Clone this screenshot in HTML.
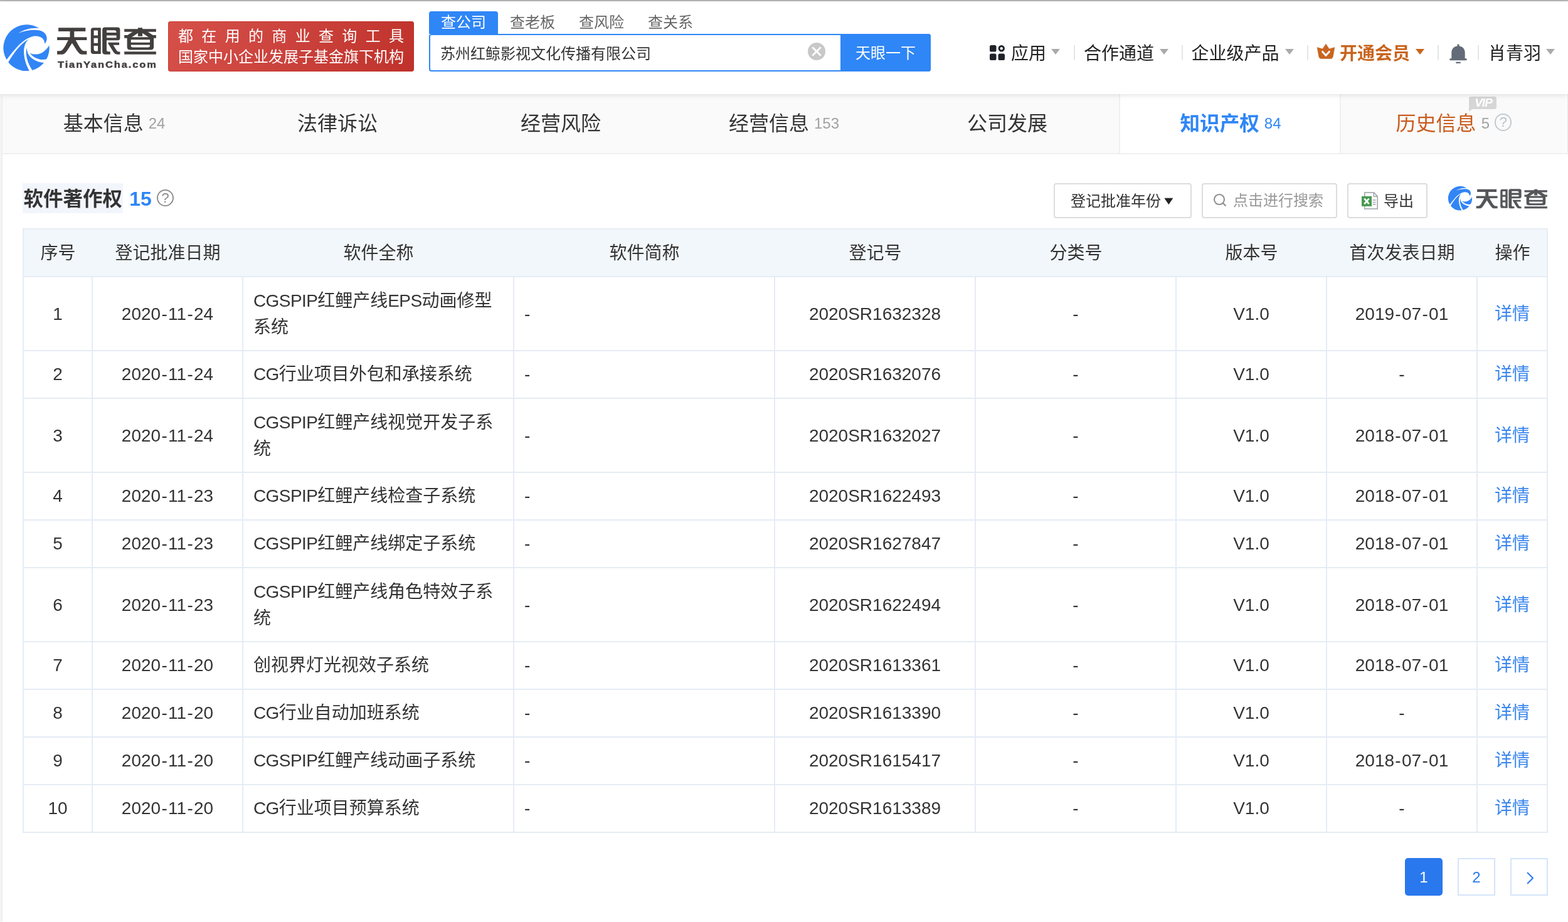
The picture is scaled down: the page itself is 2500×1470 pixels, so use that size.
<!DOCTYPE html>
<html lang="zh-CN">
<head>
<meta charset="utf-8">
<title>天眼查 - 软件著作权</title>
<style>
*{box-sizing:border-box;margin:0;padding:0}
html,body{width:2500px;height:1470px;background:#f4f4f4}
#page{position:absolute;left:0;top:0;width:2500px;height:1470px;overflow:hidden;will-change:transform}
body{font-family:"Liberation Sans","Noto Sans CJK SC",sans-serif;color:#333;position:relative;-webkit-font-smoothing:antialiased}
.abs{position:absolute}
/* ---------- top chrome line ---------- */
#topline1{left:0;top:0;width:2500px;height:1px;background:#c6c6c6}
#topline2{left:0;top:1px;width:2500px;height:1px;background:#a9a9a9}
/* ---------- header ---------- */
#header{left:0;top:2px;width:2500px;height:148px;background:#fff;box-shadow:0 1px 9px rgba(0,0,0,.13);z-index:5}
#banner{left:268px;top:32px;width:392px;height:80px;border-radius:4px;background:linear-gradient(115deg,#d6504a 0%,#cb423c 50%,#bf322b 100%);box-shadow:inset 0 0 0 1px rgba(190,30,22,.45);color:#fff;font-size:24px;white-space:nowrap}
#banner .l1{position:absolute;left:16px;top:8.3px;height:32px;line-height:32px;letter-spacing:13.33px}
#banner .l2{position:absolute;left:16px;top:41px;height:32px;line-height:32px}
#tyc{left:92px;top:91.5px;font-size:15px;line-height:18px;font-weight:bold;color:#433f3f;letter-spacing:1.7px;transform:scaleX(1.1);transform-origin:0 0;-webkit-text-stroke:0.45px #433f3f;white-space:nowrap}
/* search */
.stab{top:16px;width:110px;height:36px;line-height:36px;text-align:center;font-size:24px;color:#666;white-space:nowrap}
.stab.on{background:#2f86f6;color:#fff;border-radius:4px 4px 0 0}
#sbox{left:684px;top:52px;width:800px;height:60px;border:2px solid #2f86f6;border-radius:4px;background:#fff}
#sbox .q{position:absolute;left:16px;top:1px;height:56px;line-height:58px;font-size:24px;color:#333;white-space:nowrap}
#sbtn{left:1340px;top:52px;width:144px;height:60px;background:#2f86f6;border-radius:0 4px 4px 0;color:#fff;font-size:24px;text-align:center;line-height:62px;white-space:nowrap}
/* nav */
.nav{top:64px;height:40px;line-height:40px;font-size:28px;color:#222;white-space:nowrap}
.nav.vip{color:#c8641e;font-weight:bold}
.caret{width:0;height:0;border-left:7.5px solid transparent;border-right:7.5px solid transparent;border-top:9px solid #aaa}
.vdiv{top:70px;width:2px;height:24px;background:#e3e6ea}
/* ---------- main ---------- */
#main{left:4px;top:150px;width:2496px;height:1320px;background:#fff}
#edgeL{left:3px;top:150px;width:1px;height:1320px;background:#ebebeb}
#edgeR{left:2498px;top:150px;width:2px;height:94px;background:#f0f0f0;z-index:2}
#tabs{left:0;top:0;width:2496px;height:96px;background:linear-gradient(90deg,#fafafa 0,#fafafa 2492px,#fff 2492px);border-bottom:2px solid #f0f0f0}
.tab{top:0;width:356px;height:94px;line-height:94px;text-align:center;font-size:32px;color:#333;white-space:nowrap}
.tab i{font-style:normal;font-size:24px;color:#a2a2a2;margin-left:8px;position:relative;top:-3px}
.tab.on{background:#fff;border-left:2px solid #f0f0f0;border-right:2px solid #f0f0f0;color:#2f86f6;font-weight:bold;height:94px;width:354px;padding-left:2px;font-size:31.6px}
.tab.on i{color:#2f86f6;font-weight:normal}
.tab.his{color:#ca5b1e}
.qm.q2{display:inline-block;vertical-align:top;margin:31.3px 0 0 8px;border-color:#c3cad1;color:#b9c1c9;font-weight:normal;font-size:22.5px;line-height:24.6px;width:27.4px;height:27.4px;border-width:2px}

/* ---------- section head ---------- */
#ttl{left:32px;top:142px;width:160px;height:48px;background:#f2f6fc;font-size:31.5px;font-weight:bold;line-height:51.5px;color:#333;white-space:nowrap;padding-left:1.5px}
#cnt{left:202.3px;top:142px;height:48px;line-height:50px;font-size:32px;font-weight:bold;color:#2f86f6}
.qm{border:2.2px solid #909090;border-radius:50%;color:#8c8c8c;text-align:center;font-size:22.5px;width:27.8px;height:27.8px;line-height:24.6px}
.btn{top:142px;height:56px;border:2px solid #ddd;border-radius:4px;background:#fff;font-size:24px;line-height:54px;color:#333;white-space:nowrap}
/* ---------- table ---------- */
#tbl{left:32px;top:214px;border-collapse:separate;border-spacing:0;table-layout:fixed;width:2432px;border-right:2px solid #e5ecf5;border-bottom:2px solid #e5ecf5;font-size:28px;line-height:42px;color:#333}
#tbl th,#tbl td{border-left:2px solid #e5ecf5;border-top:2px solid #e5ecf5;padding:16px 16px 16px;text-align:center;vertical-align:middle;font-weight:normal;overflow:hidden}
#tbl th{background:#f2f7fb;border-left-width:0;padding:17px 0 15px 3px;white-space:nowrap}
#tbl th:first-child{border-left-width:2px;padding-left:1px}
#tbl b{font-weight:normal;margin:0 1.3px}
#tbl em{font-style:normal;letter-spacing:-0.6px}
#tbl td.l{text-align:left;white-space:nowrap}
#tbl tr.d td{padding-top:17px;padding-bottom:15px}
#tbl td a{color:#3a86ee;text-decoration:none}
/* ---------- pager ---------- */
.pg{top:1218px;width:60px;height:60px;border:2px solid #d5e4fb;border-radius:0;color:#2d7bf0;font-size:24px;line-height:58.5px;text-align:center;background:#fff}
.pg.on{background:#2a78ee;border-color:#2a78ee;color:#fff;border-radius:5px}
</style>
</head>
<body>
<div id="page">
<div id="topline1" class="abs"></div><div id="topline2" class="abs"></div>

<div id="header" class="abs">

  <svg width="0" height="0" style="position:absolute">
    <defs>
      <symbol id="mark" viewBox="0 0 1470 1470">
        <path d="M175,1055 A620,620 0 0 1 1045,220 C850,190 650,250 490,345 C700,270 900,245 1050,275 C1200,305 1260,420 1245,520 Q1235,580 1190,630 C1185,500 1100,430 950,425 C800,420 600,560 480,690 C380,800 280,920 175,1055 Z"/>
        <path d="M765,505 C600,600 420,780 220,1125 A620,620 0 0 0 780,1350 C680,1180 620,950 640,760 C655,650 700,570 765,505 Z"/>
        <path d="M710,740 C670,900 720,1130 860,1335 A620,620 0 0 0 1170,1135 C1000,1130 800,1020 740,880 Q715,810 710,740 Z"/>
        <path d="M795,880 C900,930 1050,920 1150,850 C1230,790 1290,720 1310,670 A620,620 0 0 1 1240,1040 C1100,1080 900,1020 795,880 Z"/>
      </symbol>
      <symbol id="word" viewBox="0 0 2500 1176">
        <g fill-rule="evenodd">
        <path d="M105,120 H740 V205 H475 V340 H770 V410 H510 C560,500 640,665 700,665 H770 V745 H660 C590,745 560,690 425,480 C290,690 260,745 190,745 H75 V665 H150 C210,665 290,500 335,410 H75 V340 H375 V205 H105 Z"/>
        <path d="M925,120 H1100 V735 H925 Q865,735 865,675 V180 Q865,120 925,120 Z M935,185 V300 H1030 V185 Z M935,365 V480 H1030 V365 Z M935,545 V620 Q935,670 985,670 H1030 V545 Z"/>
        <path d="M1195,110 H1490 Q1550,110 1550,170 V365 Q1550,415 1500,415 H1235 V640 Q1235,680 1275,680 H1320 V745 H1200 Q1135,745 1135,680 V170 Q1135,110 1195,110 Z M1235,180 V235 H1465 Q1465,180 1420,180 Z M1235,300 V355 H1465 V300 Z"/>
        <path d="M1275,465 H1530 V525 H1390 L1470,655 Q1490,685 1520,685 H1550 V745 H1480 Q1430,745 1400,700 L1270,490 Z"/>
        <path d="M1650,150 H1970 V120 H2075 V150 H2395 V215 H2200 L2320,295 H2395 V365 H2340 V570 Q2340,640 2270,640 H1785 Q1715,640 1715,570 V365 H1650 V295 H1725 L1845,215 H1650 Z M1970,245 L1825,340 H1970 Z M2075,245 V320 H1970 V340 H2220 Z M1805,400 V465 H2250 V400 Z M1805,520 V540 Q1805,580 1845,580 H2210 Q2250,580 2250,540 V520 Z"/>
        <rect x="1650" y="680" width="745" height="65"/>
        </g>
      </symbol>
    </defs>
  </svg>
  <svg class="abs" style="left:0;top:30px" width="88" height="88" fill="#3285f5"><use href="#mark"/></svg>
  <svg class="abs" style="left:86px;top:34px" width="170" height="80" fill="#433f3f"><use href="#word"/></svg>
  <div id="tyc" class="abs">TianYanCha.com</div>
  <div id="banner" class="abs"><div class="l1">都在用的商业查询工具</div><div class="l2">国家中小企业发展子基金旗下机构</div></div>

  <div class="abs stab on" style="left:684px">查公司</div>
  <div class="abs stab" style="left:794px">查老板</div>
  <div class="abs stab" style="left:904px">查风险</div>
  <div class="abs stab" style="left:1014px">查关系</div>
  <div id="sbox" class="abs"><div class="q">苏州红鲸影视文化传播有限公司</div></div>
  <div id="sbtn" class="abs">天眼一下</div>

  <!-- right nav (page y = header y + 2) -->
  <svg class="abs" style="left:1578px;top:70px" width="24" height="24" viewBox="0 0 24 24">
    <rect x="0" y="0" width="10.5" height="10.5" rx="2.6" fill="#1f2329"/>
    <rect x="0" y="13.5" width="10.5" height="10.5" rx="2.6" fill="#1f2329"/>
    <rect x="13.5" y="13.5" width="10.5" height="10.5" rx="2.6" fill="#1f2329"/>
    <circle cx="18.75" cy="5.25" r="3.7" fill="none" stroke="#1f2329" stroke-width="3"/>
  </svg>
  <div class="abs nav" style="left:1612px">应用</div>
  <div class="abs caret" style="left:1676px;top:76px"></div>
  <div class="abs vdiv" style="left:1712px"></div>
  <div class="abs nav" style="left:1728px">合作通道</div>
  <div class="abs caret" style="left:1849px;top:76px"></div>
  <div class="abs vdiv" style="left:1884px"></div>
  <div class="abs nav" style="left:1899.6px">企业级产品</div>
  <div class="abs caret" style="left:2049px;top:76px"></div>
  <div class="abs vdiv" style="left:2084px"></div>
  <svg class="abs" style="left:2100px;top:68.2px" width="28" height="24" viewBox="0 0 28 24">
    <path d="M0.1,5.6 L8.7,8 L14,0.2 L19.3,8 L27.9,5.6 L25.3,20 Q24.7,23.5 21.4,23.5 H6.6 Q3.3,23.5 2.7,20 Z" fill="#c8661f" stroke="#c8661f" stroke-width="0.6" stroke-linejoin="round"/>
    <path d="M8.6,12.4 L13.95,18.2 L19.3,12.4" fill="none" stroke="#fff" stroke-width="3" stroke-linejoin="miter" stroke-linecap="round"/>
  </svg>
  <div class="abs nav vip" style="left:2136px">开通会员</div>
  <div class="abs caret" style="left:2257px;top:76px;border-top-color:#c8641e"></div>
  <div class="abs vdiv" style="left:2292px"></div>
  <svg class="abs" style="left:2309.5px;top:66px" width="30" height="36" viewBox="0 0 30 36">
    <path d="M13.4,3.6 Q13.4,2.4 15,2.4 Q16.6,2.4 16.6,3.6 V5.6 C22,6.2 25.7,10.4 25.7,16 V25.3 H28.5 V28.2 H1.5 V25.3 H4.3 V16 C4.3,10.4 8,6.2 13.4,5.6 Z" fill="#626b77"/>
    <rect x="11.1" y="30.7" width="7.8" height="2.4" rx="1.1" fill="#626b77"/>
  </svg>
  <div class="abs vdiv" style="left:2356px"></div>
  <div class="abs nav" style="left:2373px">肖青羽</div>
  <div class="abs caret" style="left:2465px;top:76px"></div>
  <!-- clear icon -->
  <svg class="abs" style="left:1288px;top:66px" width="28" height="28" viewBox="0 0 28 28">
    <circle cx="14" cy="14" r="14" fill="#c8c8c8"/>
    <path d="M8.2,8.2 L19.8,19.8 M19.8,8.2 L8.2,19.8" stroke="#fff" stroke-width="3" stroke-linecap="round"/>
  </svg>
</div>

<div id="edgeL" class="abs"></div><div id="edgeR" class="abs"></div>
<div id="main" class="abs">
  <div id="tabs" class="abs">
    <div class="abs tab" style="left:0">基本信息<i>24</i></div>
    <div class="abs tab" style="left:356px">法律诉讼</div>
    <div class="abs tab" style="left:712px">经营风险</div>
    <div class="abs tab" style="left:1068px">经营信息<i>153</i></div>
    <div class="abs tab" style="left:1424px">公司发展</div>
    <div class="abs tab on" style="left:1780px">知识产权<i>84</i></div>
    <div class="abs tab his" style="left:2136px">历史信息<i>5</i><span class="qm q2">?</span></div>
    <svg class="abs" style="left:2338px;top:4px" width="46" height="26" viewBox="0 0 46 26"><path d="M3.1,0 H40.9 Q44,0 44,3.1 V16.8 Q44,19.9 40.9,19.9 H5.4 L0.1,23.8 V3.1 Q0.1,0 3.1,0 Z" fill="#d6d6d6"/></svg>
    <div class="abs" style="left:2343px;top:5px;width:36px;height:18px;line-height:18px;font-size:19px;font-weight:bold;font-style:italic;color:#fff;text-align:center;letter-spacing:-1px">VIP</div>
  </div>

  <div id="ttl" class="abs">软件著作权</div>
  <div id="cnt" class="abs">15</div>
  <div class="abs qm" style="left:245.6px;top:151.6px">?</div>

  <div class="abs btn" style="left:1676px;width:220px;padding-left:25px">登记批准年份</div>
  <svg class="abs" style="left:1851.6px;top:164.8px" width="15" height="12" viewBox="0 0 15 12"><path d="M1.1,1.2 H13.6 L7.35,10.4 Z" fill="#222" stroke="#222" stroke-width="1" stroke-linejoin="round"/></svg>
  <div class="abs btn" style="left:1912px;width:216px;padding-left:48px;color:#999;line-height:52.6px">点击进行搜索</div>
  <svg class="abs" style="left:1930px;top:158px" width="24" height="24" viewBox="0 0 24 24"><circle cx="10" cy="10" r="8" fill="none" stroke="#8e8e8e" stroke-width="2.1"/><path d="M15.8,15.8 L19.8,19.8" stroke="#8e8e8e" stroke-width="2.3" stroke-linecap="round"/></svg>
  <div class="abs btn" style="left:2144px;width:128px;padding-left:56px">导出</div>


  <svg class="abs" style="left:2302px;top:143.3px" width="46" height="46" fill="#3285f5"><use href="#mark"/></svg>
  <svg class="abs" style="left:2345.5px;top:145.6px" width="122" height="57.4" fill="#55565a"><use href="#word"/></svg>
  <svg class="abs" style="left:2166px;top:155px" width="30" height="30" viewBox="0 0 30 30">
    <path d="M5.8,2.1 H20.5 L26.2,7.8 V28 H5.8 Z" fill="#fff" stroke="#9ba1a8" stroke-width="1.5" stroke-linejoin="miter"/>
    <path d="M20.3,2.3 V8 H26" fill="none" stroke="#9ba1a8" stroke-width="1.4"/>
    <path d="M18.6,14 H23.6 M18.6,17.4 H23.6 M18.6,20.8 H23.6" stroke="#a4aab0" stroke-width="1.5"/>
    <rect x="1" y="7.9" width="16" height="16" fill="#479950"/>
    <path d="M5.3,11.6 L12.7,20.2 M12.7,11.6 L5.3,20.2" stroke="#fff" stroke-width="2.6"/>
  </svg>

  <table id="tbl" class="abs">
    <colgroup><col style="width:110px"><col style="width:240px"><col style="width:432px"><col style="width:416px"><col style="width:320px"><col style="width:320px"><col style="width:240px"><col style="width:240px"><col style="width:112px"></colgroup>
    <thead><tr><th>序号</th><th>登记批准日期</th><th>软件全称</th><th>软件简称</th><th>登记号</th><th>分类号</th><th>版本号</th><th>首次发表日期</th><th>操作</th></tr></thead>
    <tbody>
      <tr class="d"><td>1</td><td>2020<b>-</b>11<b>-</b>24</td><td class="l"><em>CGSPIP</em>红鲤产线<em>EPS</em>动画修型<br>系统</td><td class="l">-</td><td>2020SR1632328</td><td>-</td><td>V1.0</td><td>2019<b>-</b>07<b>-</b>01</td><td><a>详情</a></td></tr>
      <tr><td>2</td><td>2020<b>-</b>11<b>-</b>24</td><td class="l"><em>CG</em>行业项目外包和承接系统</td><td class="l">-</td><td>2020SR1632076</td><td>-</td><td>V1.0</td><td>-</td><td><a>详情</a></td></tr>
      <tr class="d"><td>3</td><td>2020<b>-</b>11<b>-</b>24</td><td class="l"><em>CGSPIP</em>红鲤产线视觉开发子系<br>统</td><td class="l">-</td><td>2020SR1632027</td><td>-</td><td>V1.0</td><td>2018<b>-</b>07<b>-</b>01</td><td><a>详情</a></td></tr>
      <tr><td>4</td><td>2020<b>-</b>11<b>-</b>23</td><td class="l"><em>CGSPIP</em>红鲤产线检查子系统</td><td class="l">-</td><td>2020SR1622493</td><td>-</td><td>V1.0</td><td>2018<b>-</b>07<b>-</b>01</td><td><a>详情</a></td></tr>
      <tr><td>5</td><td>2020<b>-</b>11<b>-</b>23</td><td class="l"><em>CGSPIP</em>红鲤产线绑定子系统</td><td class="l">-</td><td>2020SR1627847</td><td>-</td><td>V1.0</td><td>2018<b>-</b>07<b>-</b>01</td><td><a>详情</a></td></tr>
      <tr class="d"><td>6</td><td>2020<b>-</b>11<b>-</b>23</td><td class="l"><em>CGSPIP</em>红鲤产线角色特效子系<br>统</td><td class="l">-</td><td>2020SR1622494</td><td>-</td><td>V1.0</td><td>2018<b>-</b>07<b>-</b>01</td><td><a>详情</a></td></tr>
      <tr><td>7</td><td>2020<b>-</b>11<b>-</b>20</td><td class="l">创视界灯光视效子系统</td><td class="l">-</td><td>2020SR1613361</td><td>-</td><td>V1.0</td><td>2018<b>-</b>07<b>-</b>01</td><td><a>详情</a></td></tr>
      <tr><td>8</td><td>2020<b>-</b>11<b>-</b>20</td><td class="l"><em>CG</em>行业自动加班系统</td><td class="l">-</td><td>2020SR1613390</td><td>-</td><td>V1.0</td><td>-</td><td><a>详情</a></td></tr>
      <tr><td>9</td><td>2020<b>-</b>11<b>-</b>20</td><td class="l"><em>CGSPIP</em>红鲤产线动画子系统</td><td class="l">-</td><td>2020SR1615417</td><td>-</td><td>V1.0</td><td>2018<b>-</b>07<b>-</b>01</td><td><a>详情</a></td></tr>
      <tr><td>10</td><td>2020<b>-</b>11<b>-</b>20</td><td class="l"><em>CG</em>行业项目预算系统</td><td class="l">-</td><td>2020SR1613389</td><td>-</td><td>V1.0</td><td>-</td><td><a>详情</a></td></tr>
    </tbody>
  </table>

  <div class="abs pg on" style="left:2236px">1</div>
  <div class="abs pg" style="left:2320px">2</div>
  <div class="abs pg" style="left:2404px"><svg width="16" height="24" viewBox="0 0 16 24" style="position:absolute;left:22px;top:18px"><path d="M3.7,3.7 L12,12 L3.7,20.3" fill="none" stroke="#2d7bf0" stroke-width="2.1" stroke-linecap="round" stroke-linejoin="round"/></svg></div>
</div>
</div>
</body>
</html>
